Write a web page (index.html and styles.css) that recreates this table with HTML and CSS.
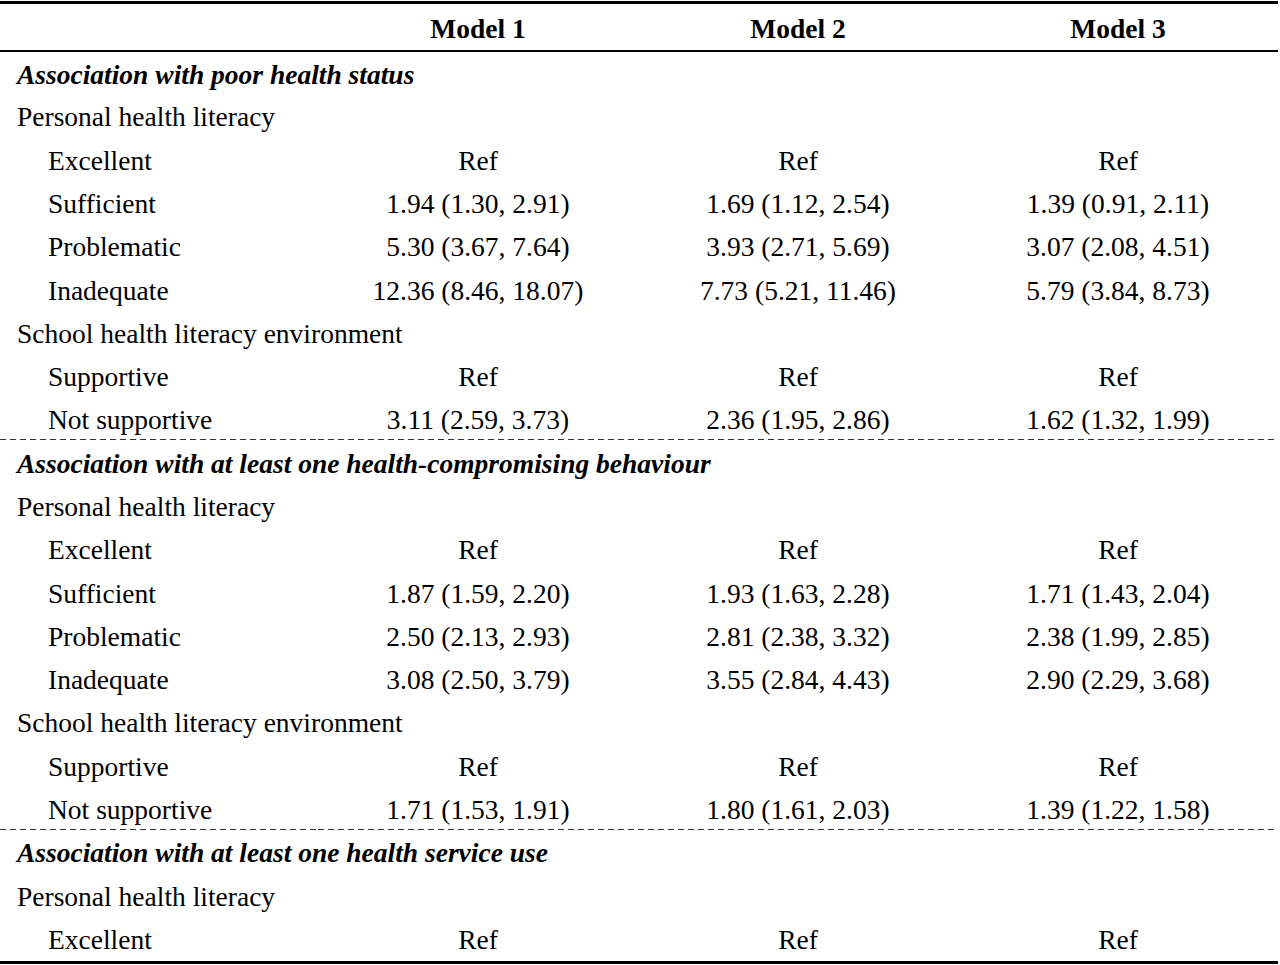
FILE: index.html
```html
<!DOCTYPE html>
<html lang="en">
<head>
  <meta charset="UTF-8">
  <title>Health literacy associations</title>
  <link rel="stylesheet" href="styles.css">
</head>
<body>
<table class="results">
  <thead>
    <tr>
      <th class="label"></th>
      <th>Model 1</th>
      <th>Model 2</th>
      <th>Model 3</th>
    </tr>
  </thead>
  <tbody>
    <!-- Poor health status -->
    <tr class="section"><td colspan="4">Association with poor health status</td></tr>
    <tr><td class="label">Personal health literacy</td><td></td><td></td><td></td></tr>
    <tr><td class="label sub">Excellent</td><td>Ref</td><td>Ref</td><td>Ref</td></tr>
    <tr><td class="label sub">Sufficient</td><td>1.94 (1.30, 2.91)</td><td>1.69 (1.12, 2.54)</td><td>1.39 (0.91, 2.11)</td></tr>
    <tr><td class="label sub">Problematic</td><td>5.30 (3.67, 7.64)</td><td>3.93 (2.71, 5.69)</td><td>3.07 (2.08, 4.51)</td></tr>
    <tr><td class="label sub">Inadequate</td><td>12.36 (8.46, 18.07)</td><td>7.73 (5.21, 11.46)</td><td>5.79 (3.84, 8.73)</td></tr>
    <tr><td class="label">School health literacy environment</td><td></td><td></td><td></td></tr>
    <tr><td class="label sub">Supportive</td><td>Ref</td><td>Ref</td><td>Ref</td></tr>
    <tr class="dashed"><td class="label sub">Not supportive</td><td>3.11 (2.59, 3.73)</td><td>2.36 (1.95, 2.86)</td><td>1.62 (1.32, 1.99)</td></tr>

    <!-- Health-compromising behaviour -->
    <tr class="section"><td colspan="4">Association with at least one health-compromising behaviour</td></tr>
    <tr><td class="label">Personal health literacy</td><td></td><td></td><td></td></tr>
    <tr><td class="label sub">Excellent</td><td>Ref</td><td>Ref</td><td>Ref</td></tr>
    <tr><td class="label sub">Sufficient</td><td>1.87 (1.59, 2.20)</td><td>1.93 (1.63, 2.28)</td><td>1.71 (1.43, 2.04)</td></tr>
    <tr><td class="label sub">Problematic</td><td>2.50 (2.13, 2.93)</td><td>2.81 (2.38, 3.32)</td><td>2.38 (1.99, 2.85)</td></tr>
    <tr><td class="label sub">Inadequate</td><td>3.08 (2.50, 3.79)</td><td>3.55 (2.84, 4.43)</td><td>2.90 (2.29, 3.68)</td></tr>
    <tr><td class="label">School health literacy environment</td><td></td><td></td><td></td></tr>
    <tr><td class="label sub">Supportive</td><td>Ref</td><td>Ref</td><td>Ref</td></tr>
    <tr class="dashed"><td class="label sub">Not supportive</td><td>1.71 (1.53, 1.91)</td><td>1.80 (1.61, 2.03)</td><td>1.39 (1.22, 1.58)</td></tr>

    <!-- Health service use -->
    <tr class="section"><td colspan="4">Association with at least one health service use</td></tr>
    <tr><td class="label">Personal health literacy</td><td></td><td></td><td></td></tr>
    <tr class="last"><td class="label sub">Excellent</td><td>Ref</td><td>Ref</td><td>Ref</td></tr>
  </tbody>
</table>
</body>
</html>
```

FILE: styles.css
```css
body {
  margin: 0;
  background: #fff;
  color: #000;
  font-family: "Liberation Serif", "Times New Roman", serif;
}

.results {
  width: 1278px;
  margin-top: 1px;
  border-collapse: collapse;
  table-layout: fixed;
  font-size: 27.5px;
  line-height: 1.1;
  border-top: 3px solid #000;
  border-bottom: 3px solid #000;
}

.results th,
.results td {
  width: 320px;
  padding: 0;
  box-sizing: border-box;
  text-align: center;
  white-space: nowrap;
}

.results th.label {
  width: 318px;
}

.results thead th {
  height: 48px;
  font-weight: bold;
  border-bottom: 2px solid #000;
  padding-top: 4px;
}

.results tbody td {
  height: 43.3px;
  padding-top: 4px;
}

.results tbody .last td {
  height: 46px;
  padding-top: 2px;
}

.results td.label {
  text-align: left;
  padding-left: 17px;
}

.results td.sub {
  padding-left: 48px;
}

.section td {
  text-align: left;
  padding-left: 17px;
  font-weight: bold;
  font-style: italic;
}

/* dashed divider between blocks: longer dashes than a css dashed border */
.dashed td {
  background: repeating-linear-gradient(90deg, #333 0 6px, transparent 6px 10px) left bottom / 100% 1px no-repeat;
}
```
